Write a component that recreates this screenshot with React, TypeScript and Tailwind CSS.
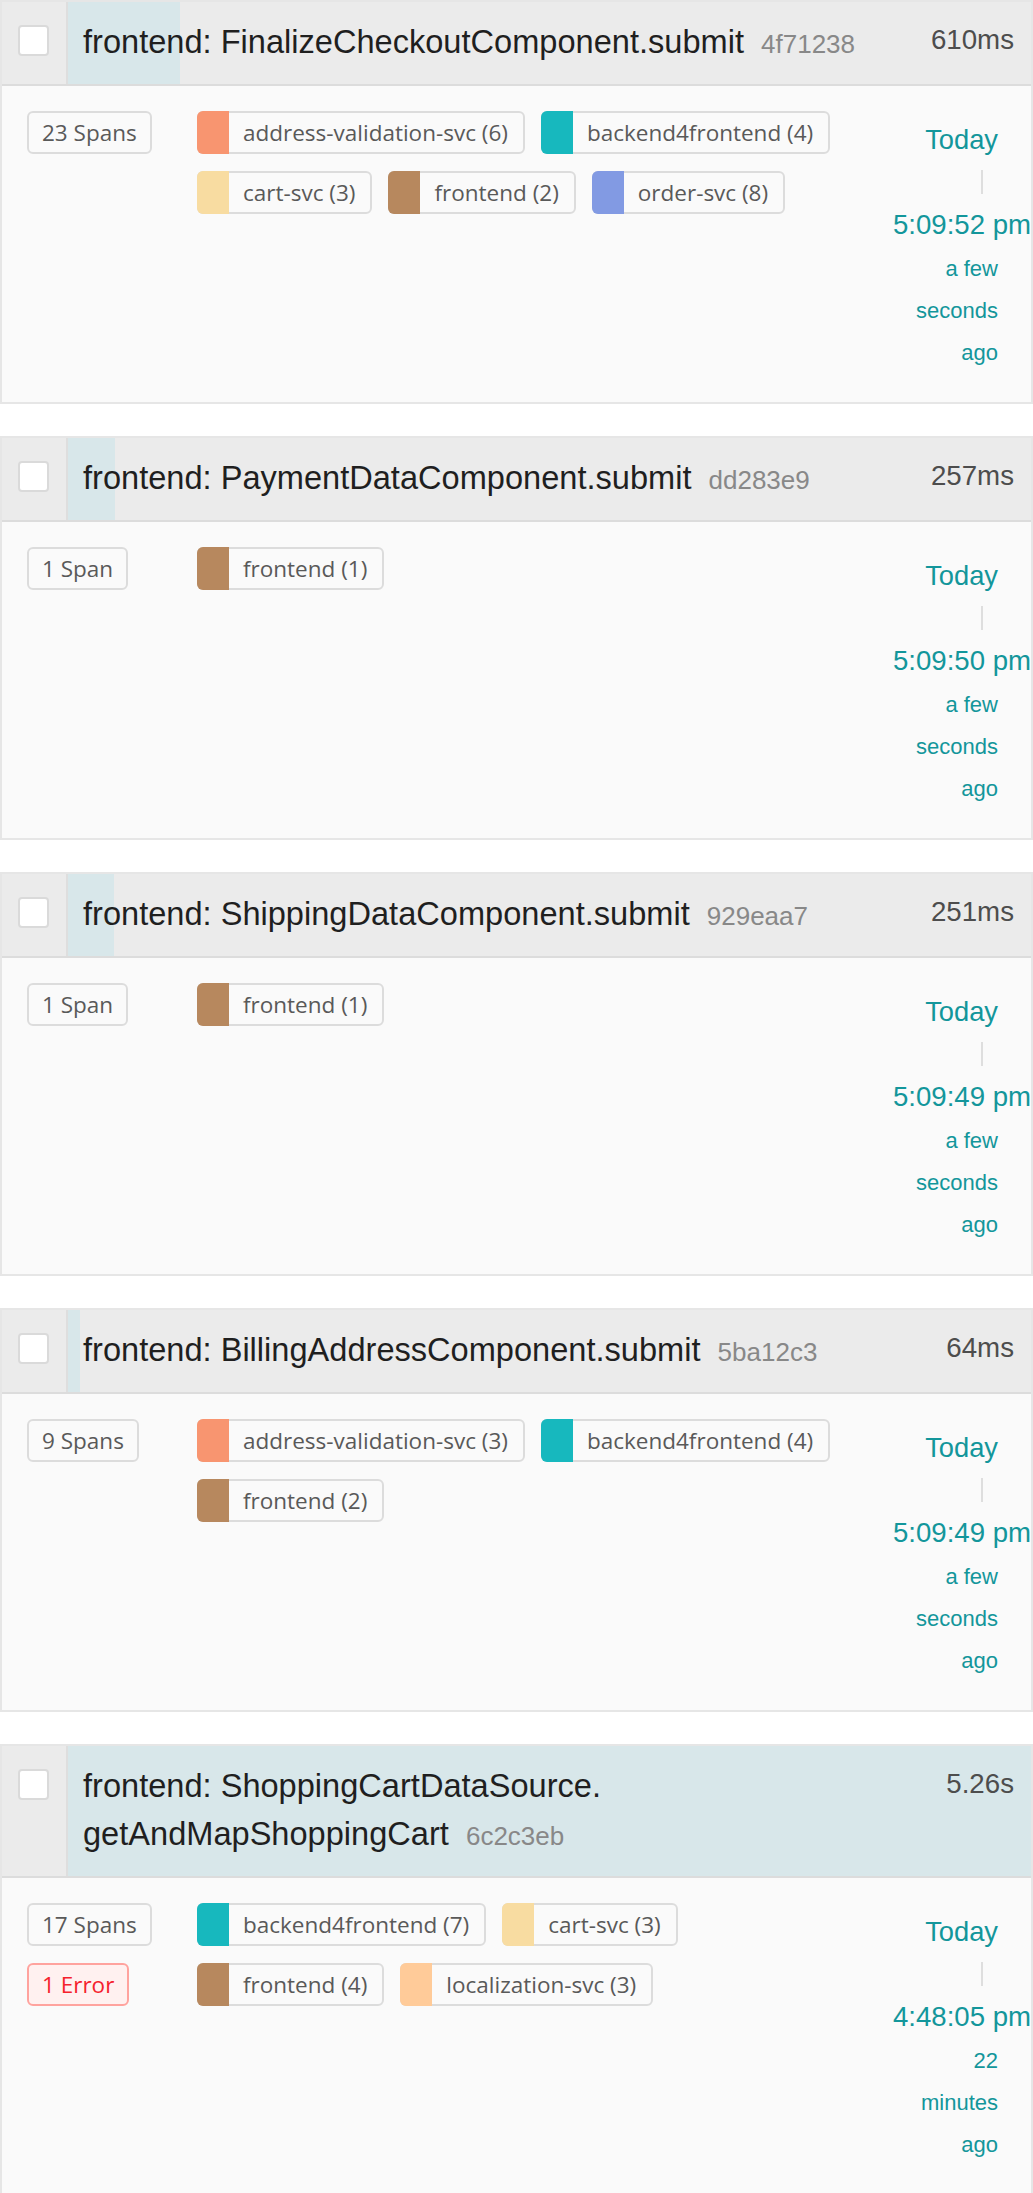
import React from "react";

type Service = { name: string; count: number; color: string };

interface Trace {
    service: string;
    op: React.ReactNode;
    id: string;
    durationMs: number;
    duration: string;
    spans: number;
    errors: number;
    services: Service[];
    time: string;
    ago: string;
}

const C = {
    address: "#F89570",
    backend: "#17B8BE",
    cart: "#F8DCA1",
    frontend: "#B7885E",
    order: "#829AE3",
    localization: "#FFCB99",
};

const MAX_MS = 5260;

const traces: Trace[] = [
    {
        service: "frontend",
        op: "FinalizeCheckoutComponent.submit",
        id: "4f71238",
        durationMs: 610,
        duration: "610ms",
        spans: 23,
        errors: 0,
        services: [
            { name: "address-validation-svc", count: 6, color: C.address },
            { name: "backend4frontend", count: 4, color: C.backend },
            { name: "cart-svc", count: 3, color: C.cart },
            { name: "frontend", count: 2, color: C.frontend },
            { name: "order-svc", count: 8, color: C.order },
        ],
        time: "5:09:52 pm",
        ago: "a few seconds ago",
    },
    {
        service: "frontend",
        op: "PaymentDataComponent.submit",
        id: "dd283e9",
        durationMs: 257,
        duration: "257ms",
        spans: 1,
        errors: 0,
        services: [{ name: "frontend", count: 1, color: C.frontend }],
        time: "5:09:50 pm",
        ago: "a few seconds ago",
    },
    {
        service: "frontend",
        op: "ShippingDataComponent.submit",
        id: "929eaa7",
        durationMs: 251,
        duration: "251ms",
        spans: 1,
        errors: 0,
        services: [{ name: "frontend", count: 1, color: C.frontend }],
        time: "5:09:49 pm",
        ago: "a few seconds ago",
    },
    {
        service: "frontend",
        op: "BillingAddressComponent.submit",
        id: "5ba12c3",
        durationMs: 64,
        duration: "64ms",
        spans: 9,
        errors: 0,
        services: [
            { name: "address-validation-svc", count: 3, color: C.address },
            { name: "backend4frontend", count: 4, color: C.backend },
            { name: "frontend", count: 2, color: C.frontend },
        ],
        time: "5:09:49 pm",
        ago: "a few seconds ago",
    },
    {
        service: "frontend",
        op: (
            <>
                ShoppingCartDataSource.
                <wbr />
                getAndMapShoppingCart
            </>
        ),
        id: "6c2c3eb",
        durationMs: 5260,
        duration: "5.26s",
        spans: 17,
        errors: 1,
        services: [
            { name: "backend4frontend", count: 7, color: C.backend },
            { name: "cart-svc", count: 3, color: C.cart },
            { name: "frontend", count: 4, color: C.frontend },
            { name: "localization-svc", count: 3, color: C.localization },
        ],
        time: "4:48:05 pm",
        ago: "22 minutes ago",
    },
];

const ServiceTag: React.FC<{ svc: Service }> = ({ svc }) => (
    <div className="flex h-[43px] items-stretch rounded-[6px] border-2 border-[#dcdcdc] bg-[#fafafa]">
        <div
            className="-my-[2px] -ml-[2px] w-[32px] rounded-l-[6px]"
            style={{ backgroundColor: svc.color }}
        />
        <span className="pl-[14px] pr-[15px] text-[22.5px] leading-[39px] text-[#595959]">
            {svc.name} ({svc.count})
        </span>
    </div>
);

const ResultItem: React.FC<{ trace: Trace }> = ({ trace }) => {
    const pct = (trace.durationMs / MAX_MS) * 100;

    return (
        <div className="border-2 border-[#e6e6e6] bg-[#fafafa]">
            {/* TITLE */}
            <div className="flex border-b-2 border-[#dcdcdc] bg-[#ebebeb]">
                <div className="w-[66px] shrink-0 border-r-2 border-[#dedede] pl-[16px] pt-[23px]">
                    <div className="h-[31px] w-[31px] rounded-[4px] border-2 border-[#dadada] bg-white" />
                </div>
                <div className="relative flex flex-1">
                    <div
                        className="absolute inset-y-0 left-0 bg-[#d8e7ea]"
                        style={{ width: `${pct}%` }}
                    />
                    <h3 className="relative flex-1 py-[16px] pl-[15px] font-['Liberation_Sans',Arial,sans-serif] text-[32.6px] leading-[48px] text-[#1f1f1f]">
                        {trace.service}: {trace.op}{" "}
                        <span className="ml-[8px] text-[26px] text-[#888]">{trace.id}</span>
                    </h3>
                    <div className="relative shrink-0 pl-[20px] pr-[17px] pt-[14px] font-['Liberation_Sans',Arial,sans-serif] text-[27.7px] leading-[48px] text-[#4d4d4d]">
                        {trace.duration}
                    </div>
                </div>
            </div>

            {/* BODY */}
            <div className="flex pb-[28px] pl-[25px] pt-[25px] font-['Open_Sans',sans-serif]">
                <div className="flex w-[170px] shrink-0 flex-col items-start gap-[17px]">
                    <div className="h-[43px] rounded-[6px] border-2 border-[#dcdcdc] bg-[#fafafa] px-[13px] text-[22.5px] leading-[39px] text-[#595959]">
                        {trace.spans} {trace.spans === 1 ? "Span" : "Spans"}
                    </div>
                    {trace.errors > 0 && (
                        <div className="h-[43px] rounded-[6px] border-2 border-[#ffa39e] bg-[#fff1f0] px-[13px] text-[22.5px] leading-[39px] text-[#f5222d]">
                            {trace.errors} Error
                        </div>
                    )}
                </div>

                <div className="flex flex-1 flex-wrap content-start items-start gap-x-[16px] gap-y-[17px]">
                    {trace.services.map((s) => (
                        <ServiceTag key={s.name} svc={s} />
                    ))}
                </div>

                <div className="ml-[30px] mr-[33px] flex w-[105px] shrink-0 flex-col items-end text-right font-['Liberation_Sans',Arial,sans-serif] text-[#13969b]">
                    <div className="mt-[13px] text-[27.3px] leading-[32px]">Today</div>
                    <div className="mr-[15px] mt-[14px] h-[24px] w-[2px] bg-[#dedede]" />
                    <div className="mt-[15px] w-full whitespace-nowrap text-left text-[27.6px] leading-[32px]">
                        {trace.time}
                    </div>
                    <div className="mt-[7px] w-full text-[22px] leading-[42px]">{trace.ago}</div>
                </div>
            </div>
        </div>
    );
};

export default function App() {
    return (
        <div className="flex min-h-screen flex-col gap-[32px] bg-white">
            {traces.map((t) => (
                <ResultItem key={t.id} trace={t} />
            ))}
        </div>
    );
}
